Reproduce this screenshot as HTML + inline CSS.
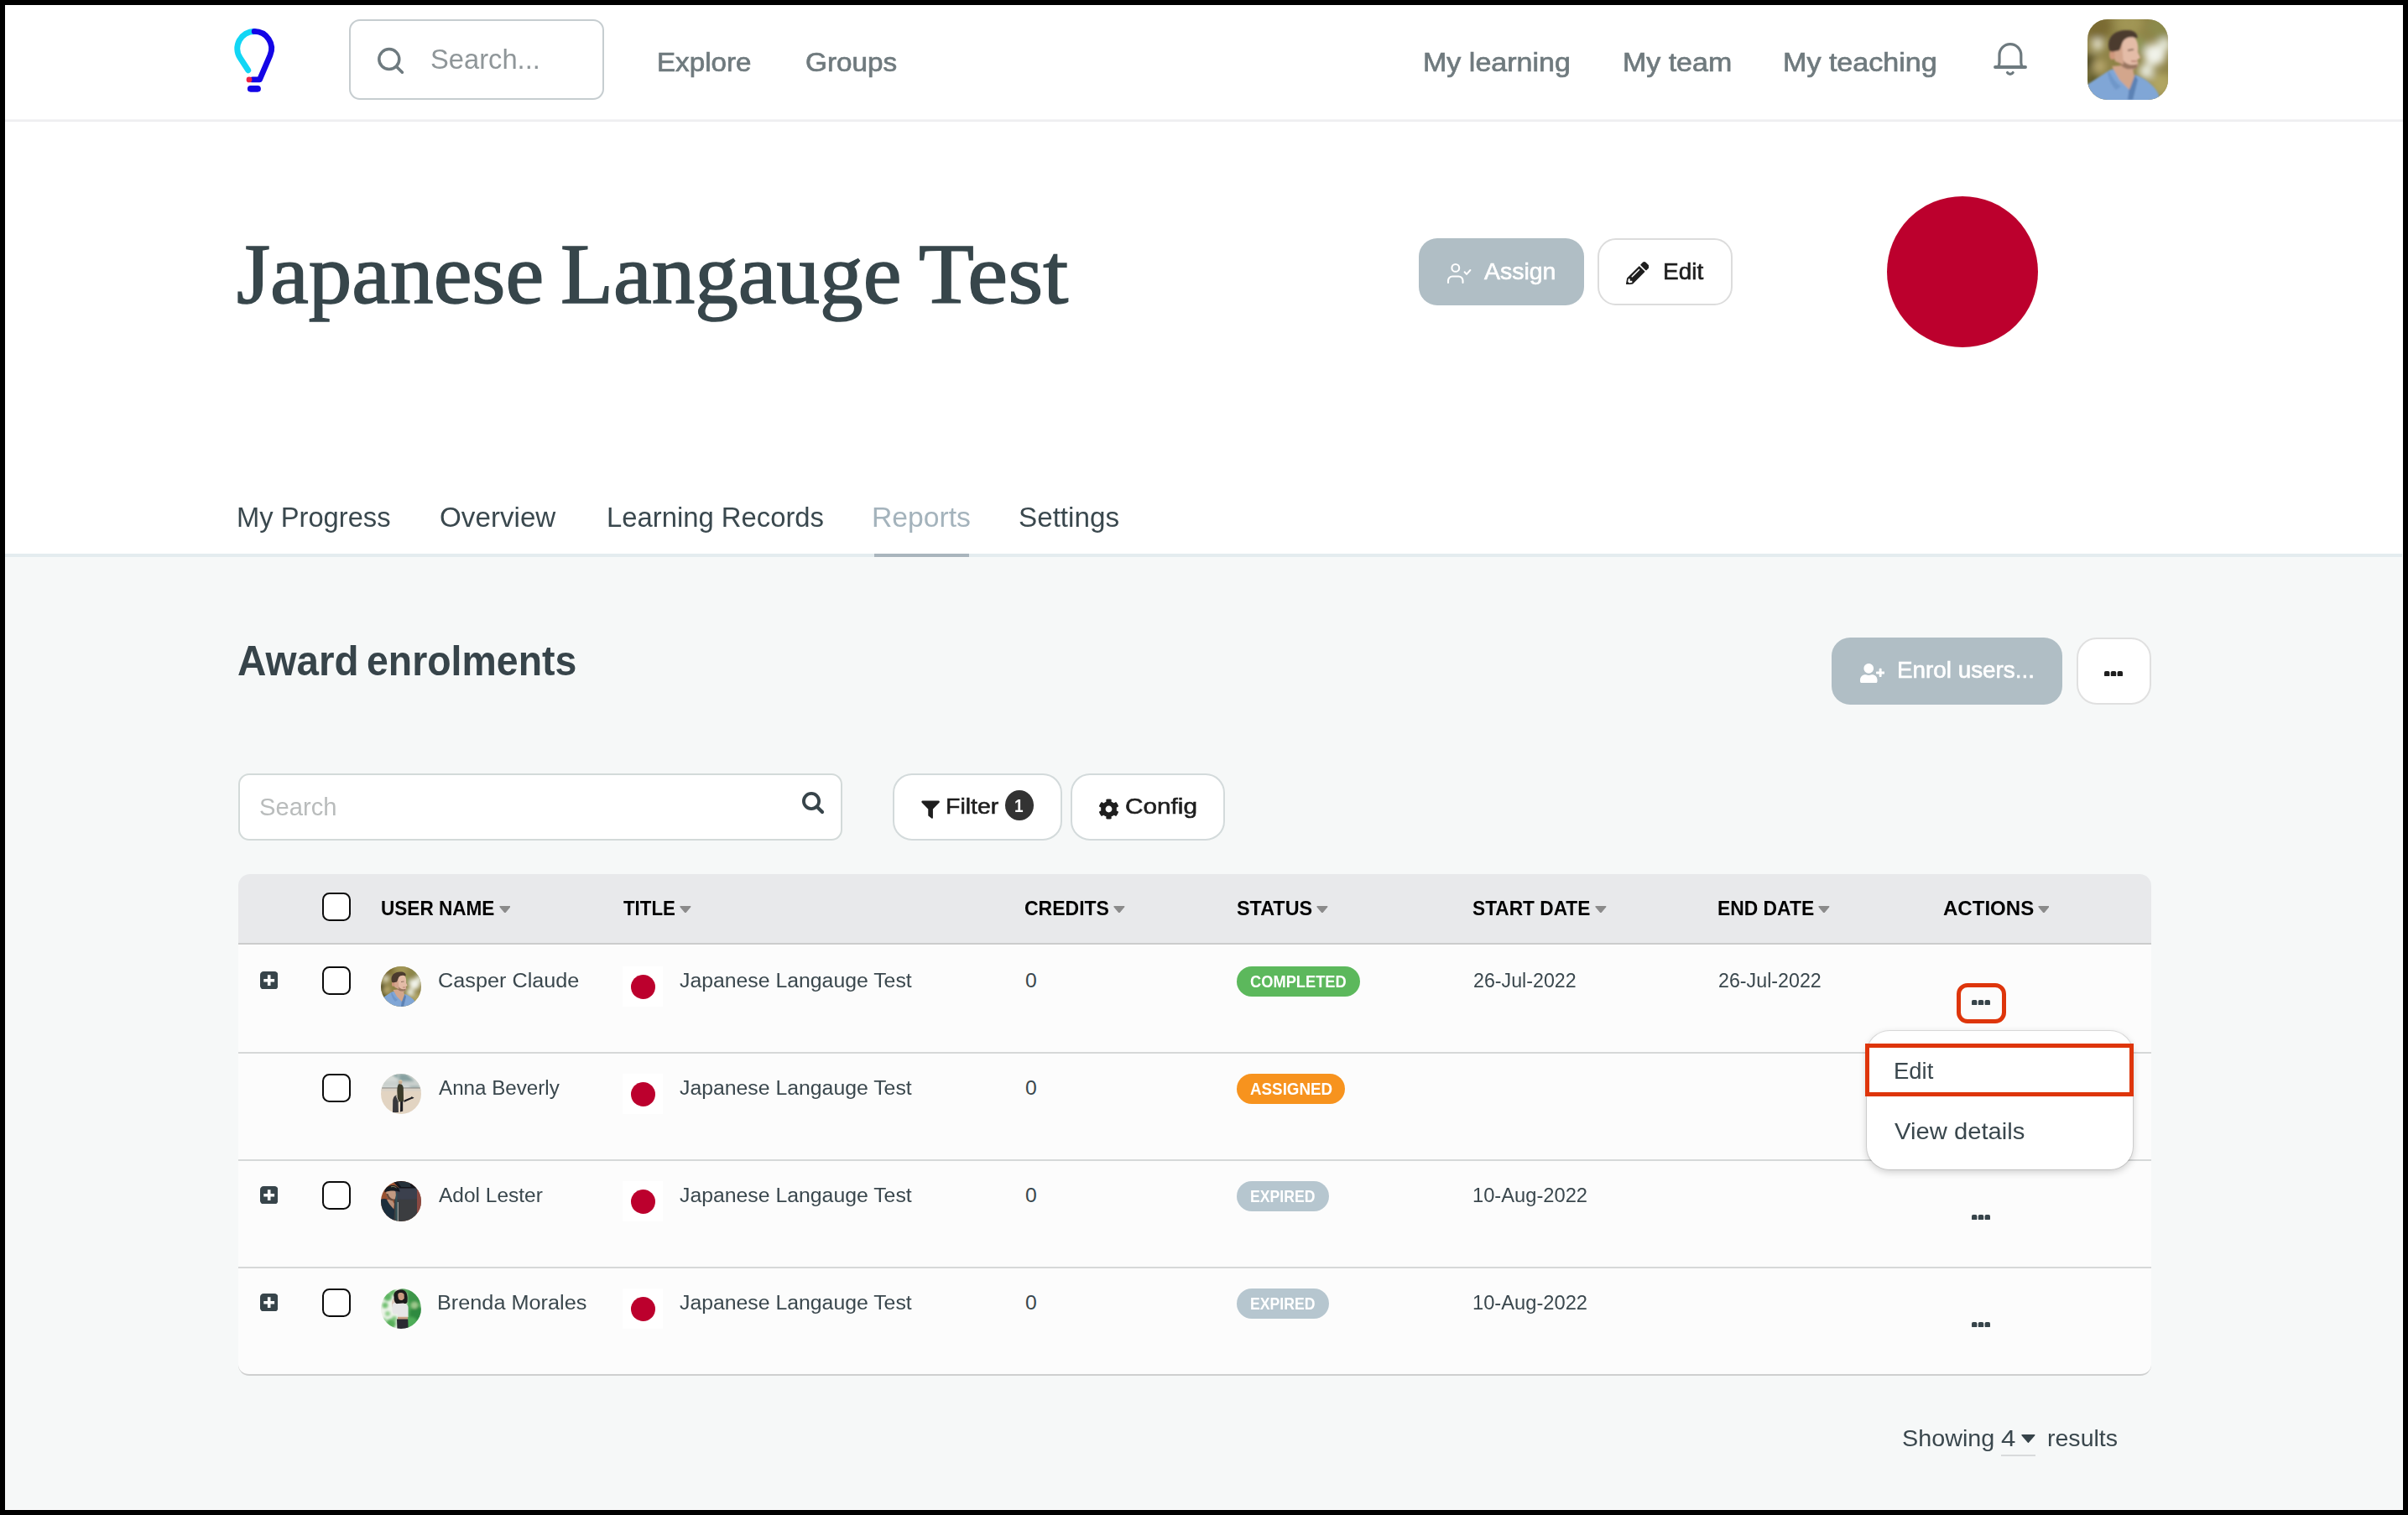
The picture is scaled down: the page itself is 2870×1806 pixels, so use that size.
<!DOCTYPE html>
<html lang="en">
<head>
<meta charset="utf-8">
<title>Japanese Langauge Test - Award enrolments</title>
<style>
html,body{margin:0;padding:0;}
body{width:2870px;height:1806px;background:#000;position:relative;font-family:"Liberation Sans",sans-serif;}
#page{position:absolute;left:0;top:0;width:2870px;height:1806px;background:#f6f8f8;overflow:hidden;}
#frame{position:absolute;left:0;top:0;width:2870px;height:1806px;border:6px solid #000;z-index:100;}
#page *{box-sizing:border-box;}
.abs,.t,svg{position:absolute;}
.t{white-space:nowrap;display:block;transform-origin:0 50%;}
.topwhite{left:0;top:0;width:2870px;height:660px;background:#fff;}
.hline{left:0;width:2870px;}
.btn{border-radius:22px;}
.btn-muted{background:#b0bec5;}
.btn-white{background:#fff;border:2px solid #e2e4e5;}
.cb{width:34px;height:34px;border:2.5px solid #0c0c0c;border-radius:8.5px;background:#fff;}
.badge{height:36px;border-radius:18px;}
.dots i{position:absolute;top:0;width:6px;height:6px;border-radius:1.5px;background:#1c1c1c;}
.dots{width:22px;height:6px;}
.av{width:48px;height:48px;border-radius:50%;overflow:hidden;}
.sq{width:48px;height:48px;background:#fff;}
.dot{width:29px;height:29px;border-radius:50%;background:#bc002d;}
.rowline{left:284px;width:2280px;height:2px;background:#d6d8d8;}
</style>
</head>
<body>
<div id="page">
<div id="frame"></div>
<div class="abs" style="left:2862.700px;top:660px;width:1.300px;height:1140px;background:#fff;z-index:50;"></div>
<div class="abs" style="left:6px;top:1798.700px;width:2858px;height:1.300px;background:#fff;z-index:50;"></div>
<!-- white top area -->
<div class="abs topwhite"></div>
<div class="abs hline" style="top:141.500px;height:3.700px;background:linear-gradient(#f6f6f8,#eaeaec);"></div>
<div class="abs hline" style="top:660px;height:4px;background:#e4ecef;"></div>

<!-- logo -->
<svg style="left:270px;top:26px" width="70" height="92" viewBox="0 0 70 92">
  <path d="M33.200 11.400 A20.400 20.400 0 0 0 16.100 42.900 L25.700 57.700" fill="none" stroke="#12d6f5" stroke-width="7" stroke-linecap="round"/>
  <path d="M33.200 11.400 A20.400 20.400 0 0 1 51.950 39.840 L39.500 68.900 L31 68.900" fill="none" stroke="#1405e6" stroke-width="6.800" stroke-linecap="round" stroke-linejoin="round"/>
  <circle cx="27" cy="68.900" r="3.400" fill="#ee2244"/>
  <path d="M28.750 79.850 L37.050 79.850" fill="none" stroke="#1405e6" stroke-width="7.700" stroke-linecap="round"/>
</svg>

<!-- header search -->
<div class="abs" style="left:416px;top:23px;width:304px;height:96px;border:2px solid #c6cdd0;border-radius:13px;background:#fff;"></div>
<svg style="left:448px;top:55px" width="36" height="36" viewBox="0 0 36 36"><circle cx="15.800" cy="15.600" r="12" fill="none" stroke="#6e7a7f" stroke-width="3.500"/><path d="M24.600 24.400 L31.400 31.200" stroke="#6e7a7f" stroke-width="3.600" stroke-linecap="round"/></svg>

<!-- bell -->
<svg style="left:2374px;top:48px" width="44" height="46" viewBox="0 0 44 46">
  <path d="M4 32 H40" fill="none" stroke="#6e7a7f" stroke-width="3.900" stroke-linecap="round"/>
  <path d="M7.500 31.400 Q9 29.500 9 26.500 V17.600 A12.900 12.900 0 0 1 34.800 17.600 V26.500 Q34.800 29.500 36.300 31.400" fill="none" stroke="#6e7a7f" stroke-width="3.200" stroke-linecap="round" stroke-linejoin="round"/>
  <path d="M18.500 38.500 A3.900 3.900 0 0 0 25.200 38.500" fill="none" stroke="#6e7a7f" stroke-width="3.200" stroke-linecap="round"/>
</svg>

<!-- user avatar -->
<svg style="left:2488px;top:23px;border-radius:24px;overflow:hidden" width="96" height="96"><use href="#casper" width="96" height="96"/></svg>

<!-- assign / edit buttons -->
<div class="abs btn btn-muted" style="left:1691px;top:284px;width:197px;height:80px;"></div>
<svg style="left:1720px;top:308px" width="38" height="34" viewBox="0 0 38 34">
  <circle cx="14.800" cy="11.400" r="4.400" fill="none" stroke="#fff" stroke-width="2.100"/>
  <path d="M6 29 V26.500 A5 5 0 0 1 11 21.500 H18.500 A5 5 0 0 1 23.500 26.500 V29" fill="none" stroke="#fff" stroke-width="2.100" stroke-linecap="round"/>
  <path d="M25.600 16.300 L28 18.900 L32.400 14" fill="none" stroke="#fff" stroke-width="2" stroke-linecap="round" stroke-linejoin="round"/>
</svg>
<div class="abs btn btn-white" style="left:1904px;top:284px;width:161px;height:80px;border-color:#dcdcdc;"></div>
<svg style="left:1937.800px;top:311.800px" width="27.600" height="27.600" viewBox="0 0 512 512"><path fill="#1e1e1e" d="M497.900 142.100l-46.100 46.100c-4.700 4.700-12.300 4.700-17 0l-111-111c-4.700-4.700-4.700-12.300 0-17l46.100-46.100c18.700-18.700 49.100-18.700 67.900 0l60.100 60.100c18.800 18.700 18.800 49.100 0 67.900zM284.200 99.800L21.600 362.400.4 483.900c-2.900 16.400 11.400 30.600 27.800 27.800l121.500-21.300 262.600-262.600c4.700-4.700 4.700-12.300 0-17l-111-111c-4.800-4.700-12.400-4.700-17.100 0zM124.100 339.900c-5.500-5.500-5.500-14.300 0-19.800l154-154c5.500-5.500 14.300-5.500 19.800 0s5.500 14.300 0 19.800l-154 154c-5.500 5.500-14.300 5.500-19.800 0zM88 424h48v36.300l-64.500 11.300-31.100-31.100L51.700 376H88v48z"/></svg>

<!-- big red circle -->
<div class="abs" style="left:2248.500px;top:233.500px;width:180px;height:180px;border-radius:50%;background:#bc002d;"></div>

<!-- reports underline -->
<div class="abs" style="left:1041.500px;top:660px;width:113.500px;height:4px;background:#a9b5bd;"></div>
<!-- enrol users + more -->
<div class="abs btn btn-muted" style="left:2183px;top:760px;width:275px;height:80px;"></div>
<svg style="left:2216.600px;top:790.500px" width="29.300" height="23.400" viewBox="0 0 640 512"><path fill="#fff" d="M624 208h-64v-64c0-8.800-7.200-16-16-16h-32c-8.800 0-16 7.200-16 16v64h-64c-8.800 0-16 7.200-16 16v32c0 8.800 7.200 16 16 16h64v64c0 8.800 7.200 16 16 16h32c8.800 0 16-7.200 16-16v-64h64c8.800 0 16-7.200 16-16v-32c0-8.800-7.200-16-16-16zm-400 48c70.700 0 128-57.300 128-128S294.700 0 224 0 96 57.300 96 128s57.300 128 128 128zm89.600 32h-16.700c-22.200 10.200-46.900 16-72.900 16s-50.600-5.800-72.900-16h-16.700C60.200 288 0 348.200 0 422.400V464c0 26.500 21.500 48 48 48h352c26.500 0 48-21.500 48-48v-41.600c0-74.200-60.200-134.400-134.400-134.400z"/></svg>
<div class="abs btn-white" style="left:2474.500px;top:760px;width:89.500px;height:80px;border-radius:24px;border-color:#e0e0e0;"></div>
<svg style="left:2508.1px;top:799.6px" width="22" height="6.600" viewBox="0 0 22 6.600"><rect x="0" y="0" width="6.400" height="6.600" rx="1.800" fill="#1e1e1e"/><rect x="7.800" y="0" width="6.400" height="6.600" rx="1.800" fill="#1e1e1e"/><rect x="15.600" y="0" width="6.400" height="6.600" rx="1.800" fill="#1e1e1e"/></svg>
<!-- search input -->
<div class="abs" style="left:284px;top:922px;width:720px;height:80px;border:2px solid #d3dad9;border-radius:13px;background:#fff;"></div>
<svg style="left:955px;top:943px" width="29" height="29" viewBox="0 0 29 29"><circle cx="12" cy="12" r="9.100" fill="none" stroke="#37444a" stroke-width="3.800"/><path d="M18.700 18.700 L25 25" stroke="#37444a" stroke-width="4.200" stroke-linecap="round"/></svg>
<!-- filter / config -->
<div class="abs btn-white" style="left:1064px;top:922px;width:202px;height:80px;border-radius:23px;border-color:#d3dadb;"></div>
<svg style="left:1097.900px;top:953.800px" width="22.200" height="22.400" viewBox="0 0 22 22"><path fill="#1e1e1e" d="M1.500 0.500 H20.500 A1.200 1.200 0 0 1 21.300 2.600 L13.800 10.400 V20.500 A1 1 0 0 1 12.200 21.300 L8.700 18.600 A1.200 1.200 0 0 1 8.200 17.600 V10.400 L0.700 2.600 A1.200 1.200 0 0 1 1.500 0.500 Z"/></svg>
<div class="abs" style="left:1197.900px;top:942.100px;width:34.200px;height:35.800px;border-radius:50%;background:#333;"></div>
<div class="abs btn-white" style="left:1276px;top:922px;width:183.500px;height:80px;border-radius:23px;border-color:#d3dadb;"></div>
<svg style="left:1309.300px;top:951.500px" width="25" height="25" viewBox="0 0 512 512"><path fill="#1e1e1e" d="M487.400 315.700l-42.600-24.600c4.300-23.200 4.300-47 0-70.200l42.600-24.600c4.900-2.800 7.100-8.600 5.500-14-11.100-35.600-30-67.800-54.700-94.600-3.800-4.100-10-5.100-14.800-2.300L380.800 110c-17.900-15.400-38.500-27.300-60.800-35.100V25.800c0-5.600-3.900-10.500-9.400-11.700-36.700-8.200-74.300-7.800-109.200 0-5.500 1.200-9.400 6.100-9.400 11.700V75c-22.200 7.900-42.800 19.800-60.800 35.100L88.700 85.500c-4.900-2.800-11-1.900-14.800 2.300-24.700 26.700-43.600 58.900-54.700 94.600-1.700 5.400.6 11.200 5.500 14L67.300 221c-4.300 23.200-4.300 47 0 70.200l-42.600 24.600c-4.900 2.800-7.100 8.600-5.500 14 11.100 35.600 30 67.800 54.700 94.600 3.800 4.100 10 5.100 14.800 2.300l42.600-24.600c17.900 15.400 38.500 27.300 60.800 35.100v49.200c0 5.600 3.900 10.500 9.400 11.700 36.700 8.200 74.300 7.800 109.200 0 5.500-1.200 9.400-6.100 9.400-11.700v-49.200c22.200-7.900 42.800-19.800 60.800-35.100l42.600 24.600c4.900 2.800 11 1.900 14.800-2.300 24.700-26.700 43.600-58.900 54.700-94.600 1.500-5.500-.7-11.300-5.600-14.100zM256 336c-44.100 0-80-35.900-80-80s35.900-80 80-80 80 35.900 80 80-35.900 80-80 80z"/></svg>
<!-- table -->
<div class="abs" style="left:284px;top:1042px;width:2280px;height:84px;background:#e8e9eb;border-radius:14px 14px 0 0;"></div>
<div class="abs" style="left:284px;top:1126px;width:2280px;height:514px;background:#fcfcfc;border-radius:0 0 13px 13px;border-bottom:2px solid #cecfcf;"></div>
<div class="abs rowline" style="top:1124px;background:#cbcccc;"></div>
<div class="abs rowline" style="top:1254px;"></div>
<div class="abs rowline" style="top:1382px;"></div>
<div class="abs rowline" style="top:1510px;"></div>
<div class="abs cb" style="left:384px;top:1064px;"></div>
<svg style="left:594.7px;top:1079.600px" width="13.800" height="8.600" viewBox="0 0 14 8.600"><path d="M1 0.700 H13 L7 7.900 Z" fill="#8b8b8b" stroke="#8b8b8b" stroke-width="1.300" stroke-linejoin="round"/></svg>
<svg style="left:810px;top:1079.600px" width="13.800" height="8.600" viewBox="0 0 14 8.600"><path d="M1 0.700 H13 L7 7.900 Z" fill="#8b8b8b" stroke="#8b8b8b" stroke-width="1.300" stroke-linejoin="round"/></svg>
<svg style="left:1327.1px;top:1079.600px" width="13.800" height="8.600" viewBox="0 0 14 8.600"><path d="M1 0.700 H13 L7 7.900 Z" fill="#8b8b8b" stroke="#8b8b8b" stroke-width="1.300" stroke-linejoin="round"/></svg>
<svg style="left:1569.3px;top:1079.600px" width="13.800" height="8.600" viewBox="0 0 14 8.600"><path d="M1 0.700 H13 L7 7.900 Z" fill="#8b8b8b" stroke="#8b8b8b" stroke-width="1.300" stroke-linejoin="round"/></svg>
<svg style="left:1901.1px;top:1079.600px" width="13.800" height="8.600" viewBox="0 0 14 8.600"><path d="M1 0.700 H13 L7 7.900 Z" fill="#8b8b8b" stroke="#8b8b8b" stroke-width="1.300" stroke-linejoin="round"/></svg>
<svg style="left:2167px;top:1079.600px" width="13.800" height="8.600" viewBox="0 0 14 8.600"><path d="M1 0.700 H13 L7 7.900 Z" fill="#8b8b8b" stroke="#8b8b8b" stroke-width="1.300" stroke-linejoin="round"/></svg>
<svg style="left:2428.6px;top:1079.600px" width="13.800" height="8.600" viewBox="0 0 14 8.600"><path d="M1 0.700 H13 L7 7.900 Z" fill="#8b8b8b" stroke="#8b8b8b" stroke-width="1.300" stroke-linejoin="round"/></svg>
<svg style="left:310px;top:1158px" width="21.400" height="21.400" viewBox="0 0 21.400 21.400"><rect width="21.400" height="21.400" rx="4.200" fill="#37444a"/><path d="M10.700 4.300 V17.100 M4.300 10.700 H17.100" stroke="#fff" stroke-width="3.600"/></svg>
<div class="abs cb" style="left:384px;top:1152px;"></div>
<div class="abs sq" style="left:742px;top:1152px;"></div>
<div class="abs dot" style="left:751.500px;top:1161.5px;"></div>
<div class="abs cb" style="left:384px;top:1280px;"></div>
<div class="abs sq" style="left:742px;top:1280px;"></div>
<div class="abs dot" style="left:751.500px;top:1289.5px;"></div>
<svg style="left:310px;top:1414px" width="21.400" height="21.400" viewBox="0 0 21.400 21.400"><rect width="21.400" height="21.400" rx="4.200" fill="#37444a"/><path d="M10.700 4.300 V17.100 M4.300 10.700 H17.100" stroke="#fff" stroke-width="3.600"/></svg>
<div class="abs cb" style="left:384px;top:1408px;"></div>
<div class="abs sq" style="left:742px;top:1408px;"></div>
<div class="abs dot" style="left:751.500px;top:1417.5px;"></div>
<svg style="left:310px;top:1542px" width="21.400" height="21.400" viewBox="0 0 21.400 21.400"><rect width="21.400" height="21.400" rx="4.200" fill="#37444a"/><path d="M10.700 4.300 V17.100 M4.300 10.700 H17.100" stroke="#fff" stroke-width="3.600"/></svg>
<div class="abs cb" style="left:384px;top:1536px;"></div>
<div class="abs sq" style="left:742px;top:1536px;"></div>
<div class="abs dot" style="left:751.500px;top:1545.5px;"></div>
<!-- row avatars -->
<svg width="0" height="0" style="left:0;top:0">
  <defs>
    <filter id="b1" x="-20%" y="-20%" width="140%" height="140%"><feGaussianBlur stdDeviation="1.1"/></filter>
    <filter id="b5" x="-40%" y="-40%" width="180%" height="180%"><feGaussianBlur stdDeviation="5"/></filter>
    <filter id="s1" x="-20%" y="-20%" width="140%" height="140%"><feGaussianBlur stdDeviation="0.6"/></filter>
    <filter id="s2" x="-40%" y="-40%" width="180%" height="180%"><feGaussianBlur stdDeviation="1.6"/></filter>
    <symbol id="casper" viewBox="0 0 96 96">
      <rect width="96" height="96" fill="#8e8246"/>
      <g filter="url(#b5)">
        <circle cx="12" cy="8" r="16" fill="#7a6a30"/><circle cx="50" cy="4" r="16" fill="#a09555"/><circle cx="86" cy="10" r="14" fill="#8b8a4c"/>
        <circle cx="2" cy="52" r="10" fill="#4e4822"/><circle cx="12" cy="30" r="7" fill="#e6e3cc"/><circle cx="14" cy="56" r="8" fill="#b9a970"/>
        <circle cx="80" cy="42" r="13" fill="#f1f3ea"/><circle cx="70" cy="62" r="9" fill="#e9ecdf"/><circle cx="92" cy="30" r="8" fill="#e4e8d8"/>
        <circle cx="88" cy="78" r="14" fill="#b0a562"/><circle cx="6" cy="74" r="10" fill="#5d5a2c"/><circle cx="60" cy="30" r="10" fill="#8f9656"/>
      </g>
      <g filter="url(#b1)">
        <path d="M-2 79 L25 61.500 C30 58 36 60 40 66 L52 82 L57 66 C68 70 79 78 84 88 L88 98 L-2 98 Z" fill="#80a6d6"/>
        <path d="M26 62 C30 70 34 76 40 80 L34 84 C28 78 25 70 24 63 Z" fill="#6f97c9"/>
        <path d="M50 80 L56 66 L60 72 L54 96 L48 96 Z" fill="#5c82b5"/>
        <path d="M29 56 L53 54 L56 68 L50 84 L38 72 Z" fill="#d3a68c"/>
        <path d="M33 32 C32 22 42 17 53 20 C60 23 61 32 60 39 L63 46 L59.500 48 L60.500 54 C59 60 51 62 45 58 C38 54 34 46 33 32Z" fill="#e4bca7"/>
        <path d="M37 50 C40 58 49 62 58.500 58 L60 53 C53 56 45 54 41 47Z" fill="#9a7660"/>
        <ellipse cx="29.500" cy="42.500" rx="3.200" ry="5.600" fill="#cf977c"/>
        <path d="M28 34 L41 28 L43 54 L33 50 Z" fill="#d4a68d"/><ellipse cx="29.500" cy="42.500" rx="3.200" ry="5.600" fill="#cf977c"/><path d="M25.500 35 C22.500 20 34 12 48 13 C56 13 61 18 59 23 C53 20 46 21 42.500 26 C40.500 30 40 33 38 37 L31 38.500 C28 39 26 38 25.500 35Z" fill="#4b3a2f"/>
        <path d="M48 37 L55 36" stroke="#6b4d3e" stroke-width="1.400"/><path d="M52 50 L59 50" stroke="#a86b5c" stroke-width="1.300"/>
      </g>
    </symbol>
  </defs>
</svg>
<svg class="av" style="left:454px;top:1152px" width="48" height="48"><use href="#casper" width="48" height="48"/></svg>
<svg class="av" style="left:454px;top:1280px" width="48" height="48" viewBox="0 0 48 48">
  <rect width="48" height="48" fill="#e2d4c2"/>
  <rect y="0" width="48" height="17" fill="#d5dad6"/>
  <g filter="url(#s2)"><path d="M12 0 L30 0 L46 14 L46 17 L36 17 Z" fill="#86a0a0"/><rect x="2" y="9" width="44" height="6" fill="#c9d0cd"/><rect x="20" y="0" width="2" height="16" fill="#b5c2c0"/></g>
  <rect y="16.400" width="48" height="1.300" fill="#8c8c88"/>
  <rect y="17.700" width="48" height="3" fill="#d9d2c6"/>
  <g filter="url(#s1)">
    <path d="M27.500 31.500 L36.800 27.800 L37.600 29.600 L27.500 34 Z" fill="#1c1c22"/><path d="M36 27 L39.500 28.600 L37.600 30 Z" fill="#1c1c22"/>
    <path d="M23.200 32 H26.200 L26.200 44.500 L23 45.500 Z" fill="#1c1c22"/>
    <path d="M21 12.500 C24 11.500 26.500 13 26.800 17 L27 33 L20 33.500 L19.500 24 C19 19 19.500 14.500 21 12.500 Z" fill="#3b3a2a"/>
    <circle cx="23.200" cy="10" r="2.300" fill="#c9ad92"/><path d="M21.200 9 C22 6.800 25 6.800 25.600 9.200 C24 8.600 22.600 8.600 21.200 9Z" fill="#d8c8a8"/>
    <path d="M14.200 33 C14.200 30 15.500 26 18.500 25.500 L20.600 33 L20.900 46 L14 46.300 Z" fill="#38383b"/>
    <path d="M18 26 L21 33" stroke="#d8d2c8" stroke-width="0.800"/>
  </g>
</svg>
<svg class="av" style="left:454px;top:1408px" width="48" height="48" viewBox="0 0 48 48">
  <rect width="48" height="48" fill="#9a5230"/>
  <g filter="url(#s1)">
    <rect x="42.500" y="0" width="6" height="48" fill="#8a4a42"/>
    <path d="M15.800 8 H43 V48 H15.800 Z" fill="#3b3e40"/>
    <path d="M15.800 8 H43 V21 C34 22 24 22 15.800 21 Z" fill="#3a3f4e"/>
    <path d="M14 0 H40 L43 8.600 H22 Z" fill="#14161a"/><path d="M20 1 H34 L36 7 H24 Z" fill="#25303a"/>
    <rect x="19.600" y="25" width="1.300" height="23" fill="#a3a8a6"/><rect x="17.400" y="14" width="2" height="34" fill="#2e5a62" opacity=".7"/>
    <path d="M-1 22 C4 20 8 21 10 24 L16 34 L15.800 48 H-1 Z" fill="#1f2d3c"/>
    <path d="M7 22 C9 26 12 30 15 33 L15.800 27 L13 22 Z" fill="#b98e76"/>
    <path d="M6.500 12 C9 10 15 10 17.500 12.500 L17.800 17 L16.800 21.500 C14 23.500 10 22.500 8 20 C6.500 17.500 6 14.500 6.500 12 Z" fill="#c29a82"/>
    <path d="M6 15 C7 19 9 22 12 23 C14 23.600 16 22.800 17 21.500 C14 22 10 20 8.500 15 Z" fill="#6b4c3c"/>
    <path d="M4.500 11.500 C6 5.500 14 3.500 19 6.500 C21.500 8 22.600 10.500 22.500 12.800 C17 11 10 11 4.500 13.500 Z" fill="#191b21"/>
    <path d="M12 6.800 C14.500 6 17 6.600 18.500 8" stroke="#8a8560" stroke-width="1" fill="none"/>
  </g>
</svg>
<svg class="av" style="left:454px;top:1536px" width="48" height="48" viewBox="0 0 48 48">
  <rect width="48" height="48" fill="#eef3ea"/>
  <g filter="url(#s2)">
    <rect x="31" y="0" width="17" height="48" fill="#4aa652"/><circle cx="40" cy="10" r="9" fill="#3d9648"/><circle cx="43" cy="30" r="9" fill="#2f8a40"/><circle cx="36" cy="42" r="8" fill="#4eac58"/><circle cx="40" cy="20" r="4" fill="#9cc78c"/>
    <circle cx="8" cy="10" r="5" fill="#5db562"/><circle cx="14" cy="4" r="4" fill="#6abb6a"/><circle cx="5" cy="20" r="3.500" fill="#6fc070"/><circle cx="8" cy="30" r="3" fill="#8fd08c"/><circle cx="12" cy="42" r="6" fill="#5ab05c"/><circle cx="4" cy="38" r="3" fill="#9ad69a"/><circle cx="16" cy="36" r="3" fill="#7cc67c"/><circle cx="27" cy="3" r="4" fill="#4a9a50"/>
  </g>
  <g filter="url(#s1)">
    <path d="M13 20 C13 14 14 11 17 11.500 L18.500 19 L15 26 Z" fill="#d9c4b6"/>
    <path d="M13.500 19 C16 16 22 16 25 18 C29 17 32 19 32.500 22 L32.500 34 L20 34.500 L19.500 30 C16 32 13.500 30 13.500 26 Z" fill="#e6e6e6"/>
    <path d="M20 33.800 H32 L32 37 H20 Z" fill="#c9a084"/>
    <path d="M19 36.600 H32.200 L32.600 48 H19.400 Z" fill="#2a2c30"/>
    <path d="M15.500 10 C14 3 22 -1 28 2.500 C32 5 32 12 31.500 16 C30.500 18.500 28 18.500 27 17.500 L20 18 C17.500 19 15.500 15 15.500 10 Z" fill="#1e1a1a"/>
    <path d="M20.500 6.500 C22 4.500 26 4.500 27.600 7 L27.800 11.500 C27 14 23.500 15 21.500 13 C20.500 11 20 8.500 20.500 6.500 Z" fill="#c99b80"/>
  </g>
</svg>

<!-- badges -->
<div class="abs badge" style="left:1474px;top:1152px;width:147px;background:#5cb85c;"></div>
<div class="abs badge" style="left:1474px;top:1280px;width:129px;background:#f7931e;"></div>
<div class="abs badge" style="left:1474px;top:1408px;width:110px;background:#b6c6cf;"></div>
<div class="abs badge" style="left:1474px;top:1536px;width:110px;background:#b6c6cf;"></div>
<!-- action dots -->
<div class="abs" style="left:2332px;top:1172px;width:59px;height:48px;border:5px solid #de350b;border-radius:13px;"></div>
<svg style="left:2350px;top:1191.8px" width="22" height="6.600" viewBox="0 0 22 6.600"><rect x="0" y="0" width="6.400" height="6.600" rx="1.800" fill="#37444a"/><rect x="7.800" y="0" width="6.400" height="6.600" rx="1.800" fill="#37444a"/><rect x="15.600" y="0" width="6.400" height="6.600" rx="1.800" fill="#37444a"/></svg>
<svg style="left:2350px;top:1447.8px" width="22" height="6.600" viewBox="0 0 22 6.600"><rect x="0" y="0" width="6.400" height="6.600" rx="1.800" fill="#37444a"/><rect x="7.800" y="0" width="6.400" height="6.600" rx="1.800" fill="#37444a"/><rect x="15.600" y="0" width="6.400" height="6.600" rx="1.800" fill="#37444a"/></svg>
<svg style="left:2350px;top:1575.8px" width="22" height="6.600" viewBox="0 0 22 6.600"><rect x="0" y="0" width="6.400" height="6.600" rx="1.800" fill="#37444a"/><rect x="7.800" y="0" width="6.400" height="6.600" rx="1.800" fill="#37444a"/><rect x="15.600" y="0" width="6.400" height="6.600" rx="1.800" fill="#37444a"/></svg>
<!-- dropdown -->
<div class="abs" style="left:2225.400px;top:1229px;width:316.600px;height:165.400px;background:#fff;border-radius:27px;box-shadow:0 3px 10px rgba(0,0,0,.20),0 0 0 1px rgba(0,0,0,.10);"></div>
<div class="abs" style="left:2223.200px;top:1244px;width:319.800px;height:62.800px;border:5px solid #de350b;background:#fff;"></div>
<!-- footer -->
<svg style="left:2409.400px;top:1709.800px" width="16.800" height="10" viewBox="0 0 16.800 10"><path d="M1 0.800 H15.800 L8.400 9.200 Z" fill="#37444a" stroke="#37444a" stroke-width="1.400" stroke-linejoin="round"/></svg>
<div class="abs" style="left:2385px;top:1734px;width:41.200px;height:2px;background:#d8dadb;"></div>

<!-- text -->
<span class="t" style="left:513.1px;top:52.6px;font-size:34.0px;line-height:34.0px;color:#8f9699;font-weight:400;transform:scaleX(0.9618)">Search...</span>
<span class="t" style="left:783.4px;top:59.0px;font-size:31.5px;line-height:31.5px;color:#6f7a7e;font-weight:400;transform:scaleX(1.0529);-webkit-text-stroke:0.7px #6f7a7e">Explore</span>
<span class="t" style="left:959.9px;top:59.0px;font-size:31.5px;line-height:31.5px;color:#6f7a7e;font-weight:400;transform:scaleX(1.0569);-webkit-text-stroke:0.7px #6f7a7e">Groups</span>
<span class="t" style="left:1696.1px;top:59.0px;font-size:31.5px;line-height:31.5px;color:#6f7a7e;font-weight:400;transform:scaleX(1.0805);-webkit-text-stroke:0.7px #6f7a7e">My learning</span>
<span class="t" style="left:1933.5px;top:59.0px;font-size:31.5px;line-height:31.5px;color:#6f7a7e;font-weight:400;transform:scaleX(1.0778);-webkit-text-stroke:0.7px #6f7a7e">My team</span>
<span class="t" style="left:2125.2px;top:59.0px;font-size:31.5px;line-height:31.5px;color:#6f7a7e;font-weight:400;transform:scaleX(1.0819);-webkit-text-stroke:0.7px #6f7a7e">My teaching</span>
<span class="t" style="left:281.5px;top:276.2px;font-size:101.8px;line-height:101.8px;color:#37464b;font-weight:400;transform:scaleX(1.0123);-webkit-text-stroke:1.5px #37464b;font-family:'Liberation Serif', serif">Japanese</span>
<span class="t" style="left:667.9px;top:276.2px;font-size:101.8px;line-height:101.8px;color:#37464b;font-weight:400;transform:scaleX(1.0126);-webkit-text-stroke:1.5px #37464b;font-family:'Liberation Serif', serif">Langauge</span>
<span class="t" style="left:1094.9px;top:276.2px;font-size:101.8px;line-height:101.8px;color:#37464b;font-weight:400;transform:scaleX(1.0599);-webkit-text-stroke:1.5px #37464b;font-family:'Liberation Serif', serif">Test</span>
<span class="t" style="left:1769.2px;top:310.1px;font-size:27.3px;line-height:27.3px;color:#ffffff;font-weight:400;transform:scaleX(1.0420);-webkit-text-stroke:0.6px #ffffff">Assign</span>
<span class="t" style="left:1981.9px;top:310.1px;font-size:27.3px;line-height:27.3px;color:#1e1e1e;font-weight:400;transform:scaleX(1.0267);-webkit-text-stroke:0.6px #1e1e1e">Edit</span>
<span class="t" style="left:281.5px;top:600.0px;font-size:33.0px;line-height:33.0px;color:#3a484e;font-weight:400;transform:scaleX(0.9912)">My Progress</span>
<span class="t" style="left:524.1px;top:600.0px;font-size:33.0px;line-height:33.0px;color:#3a484e;font-weight:400;transform:scaleX(1.0059)">Overview</span>
<span class="t" style="left:722.5px;top:600.0px;font-size:33.0px;line-height:33.0px;color:#3a484e;font-weight:400;transform:scaleX(0.9941)">Learning Records</span>
<span class="t" style="left:1038.6px;top:600.0px;font-size:33.0px;line-height:33.0px;color:#a4b3bc;font-weight:400;transform:scaleX(1.0207)">Reports</span>
<span class="t" style="left:1213.7px;top:600.0px;font-size:33.0px;line-height:33.0px;color:#3a484e;font-weight:400;transform:scaleX(1.0069)">Settings</span>
<span class="t" style="left:282.9px;top:764.0px;font-size:49.7px;line-height:49.7px;color:#37444a;font-weight:700;transform:scaleX(0.9578)">Award</span>
<span class="t" style="left:437.3px;top:764.0px;font-size:49.7px;line-height:49.7px;color:#37444a;font-weight:700;transform:scaleX(0.9345)">enrolments</span>
<span class="t" style="left:2260.5px;top:784.9px;font-size:27.6px;line-height:27.6px;color:#ffffff;font-weight:400;transform:scaleX(1.0088);-webkit-text-stroke:0.6px #ffffff">Enrol users...</span>
<span class="t" style="left:308.6px;top:946.3px;font-size:30.4px;line-height:30.4px;color:#b9bcbc;font-weight:400;transform:scaleX(0.9613)">Search</span>
<span class="t" style="left:1126.5px;top:947.5px;font-size:26.5px;line-height:26.5px;color:#1e1e1e;font-weight:400;transform:scaleX(1.0737);-webkit-text-stroke:0.6px #1e1e1e">Filter</span>
<span class="t" style="left:1340.9px;top:947.5px;font-size:26.5px;line-height:26.5px;color:#1e1e1e;font-weight:400;transform:scaleX(1.1216);-webkit-text-stroke:0.6px #1e1e1e">Config</span>
<span class="t" style="left:1208.7px;top:950.0px;font-size:22.5px;line-height:22.5px;color:#ffffff;font-weight:700;transform:scaleX(0.8455)">1</span>
<span class="t" style="left:454.0px;top:1070.7px;font-size:24.0px;line-height:24.0px;color:#000000;font-weight:700;transform:scaleX(0.9401)">USER NAME</span>
<span class="t" style="left:742.7px;top:1070.7px;font-size:24.0px;line-height:24.0px;color:#000000;font-weight:700;transform:scaleX(0.9288)">TITLE</span>
<span class="t" style="left:1221.4px;top:1070.7px;font-size:24.0px;line-height:24.0px;color:#000000;font-weight:700;transform:scaleX(0.9583)">CREDITS</span>
<span class="t" style="left:1473.5px;top:1070.7px;font-size:24.0px;line-height:24.0px;color:#000000;font-weight:700;transform:scaleX(0.9758)">STATUS</span>
<span class="t" style="left:1755.3px;top:1070.7px;font-size:24.0px;line-height:24.0px;color:#000000;font-weight:700;transform:scaleX(0.9456)">START DATE</span>
<span class="t" style="left:2047.0px;top:1070.7px;font-size:24.0px;line-height:24.0px;color:#000000;font-weight:700;transform:scaleX(0.9525)">END DATE</span>
<span class="t" style="left:2315.5px;top:1070.7px;font-size:24.0px;line-height:24.0px;color:#000000;font-weight:700;transform:scaleX(1.0019)">ACTIONS</span>
<span class="t" style="left:521.5px;top:1157.0px;font-size:24.7px;line-height:24.7px;color:#3a474d;font-weight:400;transform:scaleX(1.0227)">Casper Claude</span>
<span class="t" style="left:809.8px;top:1157.0px;font-size:24.7px;line-height:24.7px;color:#3a474d;font-weight:400;transform:scaleX(1.0044)">Japanese Langauge Test</span>
<span class="t" style="left:1222.0px;top:1157.0px;font-size:24.7px;line-height:24.7px;color:#3a474d;font-weight:400;transform:scaleX(1.0000)">0</span>
<span class="t" style="left:522.5px;top:1285.0px;font-size:24.7px;line-height:24.7px;color:#3a474d;font-weight:400;transform:scaleX(0.9796)">Anna Beverly</span>
<span class="t" style="left:809.8px;top:1285.0px;font-size:24.7px;line-height:24.7px;color:#3a474d;font-weight:400;transform:scaleX(1.0044)">Japanese Langauge Test</span>
<span class="t" style="left:1222.0px;top:1285.0px;font-size:24.7px;line-height:24.7px;color:#3a474d;font-weight:400;transform:scaleX(1.0000)">0</span>
<span class="t" style="left:522.5px;top:1413.0px;font-size:24.7px;line-height:24.7px;color:#3a474d;font-weight:400;transform:scaleX(0.9920)">Adol Lester</span>
<span class="t" style="left:809.8px;top:1413.0px;font-size:24.7px;line-height:24.7px;color:#3a474d;font-weight:400;transform:scaleX(1.0044)">Japanese Langauge Test</span>
<span class="t" style="left:1222.0px;top:1413.0px;font-size:24.7px;line-height:24.7px;color:#3a474d;font-weight:400;transform:scaleX(1.0000)">0</span>
<span class="t" style="left:520.5px;top:1541.0px;font-size:24.7px;line-height:24.7px;color:#3a474d;font-weight:400;transform:scaleX(1.0233)">Brenda Morales</span>
<span class="t" style="left:809.8px;top:1541.0px;font-size:24.7px;line-height:24.7px;color:#3a474d;font-weight:400;transform:scaleX(1.0044)">Japanese Langauge Test</span>
<span class="t" style="left:1222.0px;top:1541.0px;font-size:24.7px;line-height:24.7px;color:#3a474d;font-weight:400;transform:scaleX(1.0000)">0</span>
<span class="t" style="left:1489.8px;top:1160.0px;font-size:20.1px;line-height:20.1px;color:#ffffff;font-weight:700;transform:scaleX(0.9096)">COMPLETED</span>
<span class="t" style="left:1489.8px;top:1288.0px;font-size:20.1px;line-height:20.1px;color:#ffffff;font-weight:700;transform:scaleX(0.9350)">ASSIGNED</span>
<span class="t" style="left:1489.8px;top:1416.0px;font-size:20.1px;line-height:20.1px;color:#ffffff;font-weight:700;transform:scaleX(0.8770)">EXPIRED</span>
<span class="t" style="left:1489.8px;top:1544.0px;font-size:20.1px;line-height:20.1px;color:#ffffff;font-weight:700;transform:scaleX(0.8770)">EXPIRED</span>
<span class="t" style="left:1755.7px;top:1157.0px;font-size:24.7px;line-height:24.7px;color:#3a474d;font-weight:400;transform:scaleX(0.9406)">26-Jul-2022</span>
<span class="t" style="left:2047.6px;top:1157.0px;font-size:24.7px;line-height:24.7px;color:#3a474d;font-weight:400;transform:scaleX(0.9414)">26-Jul-2022</span>
<span class="t" style="left:1754.7px;top:1413.0px;font-size:24.7px;line-height:24.7px;color:#3a474d;font-weight:400;transform:scaleX(0.9600)">10-Aug-2022</span>
<span class="t" style="left:1754.7px;top:1541.0px;font-size:24.7px;line-height:24.7px;color:#3a474d;font-weight:400;transform:scaleX(0.9600)">10-Aug-2022</span>
<span class="t" style="left:2257.3px;top:1262.1px;font-size:28.2px;line-height:28.2px;color:#3a474d;font-weight:400;transform:scaleX(0.9745)">Edit</span>
<span class="t" style="left:2258.3px;top:1335.0px;font-size:27.9px;line-height:27.9px;color:#3a474d;font-weight:400;transform:scaleX(1.0483)">View details</span>
<span class="t" style="left:2267.3px;top:1699.9px;font-size:28.5px;line-height:28.5px;color:#3a474d;font-weight:400;transform:scaleX(1.0085)">Showing</span>
<span class="t" style="left:2384.8px;top:1699.9px;font-size:28.5px;line-height:28.5px;color:#3a474d;font-weight:400;transform:scaleX(1.0929)">4</span>
<span class="t" style="left:2440.2px;top:1699.9px;font-size:28.5px;line-height:28.5px;color:#3a474d;font-weight:400;transform:scaleX(1.0012)">results</span>
</div>
</body>
</html>
